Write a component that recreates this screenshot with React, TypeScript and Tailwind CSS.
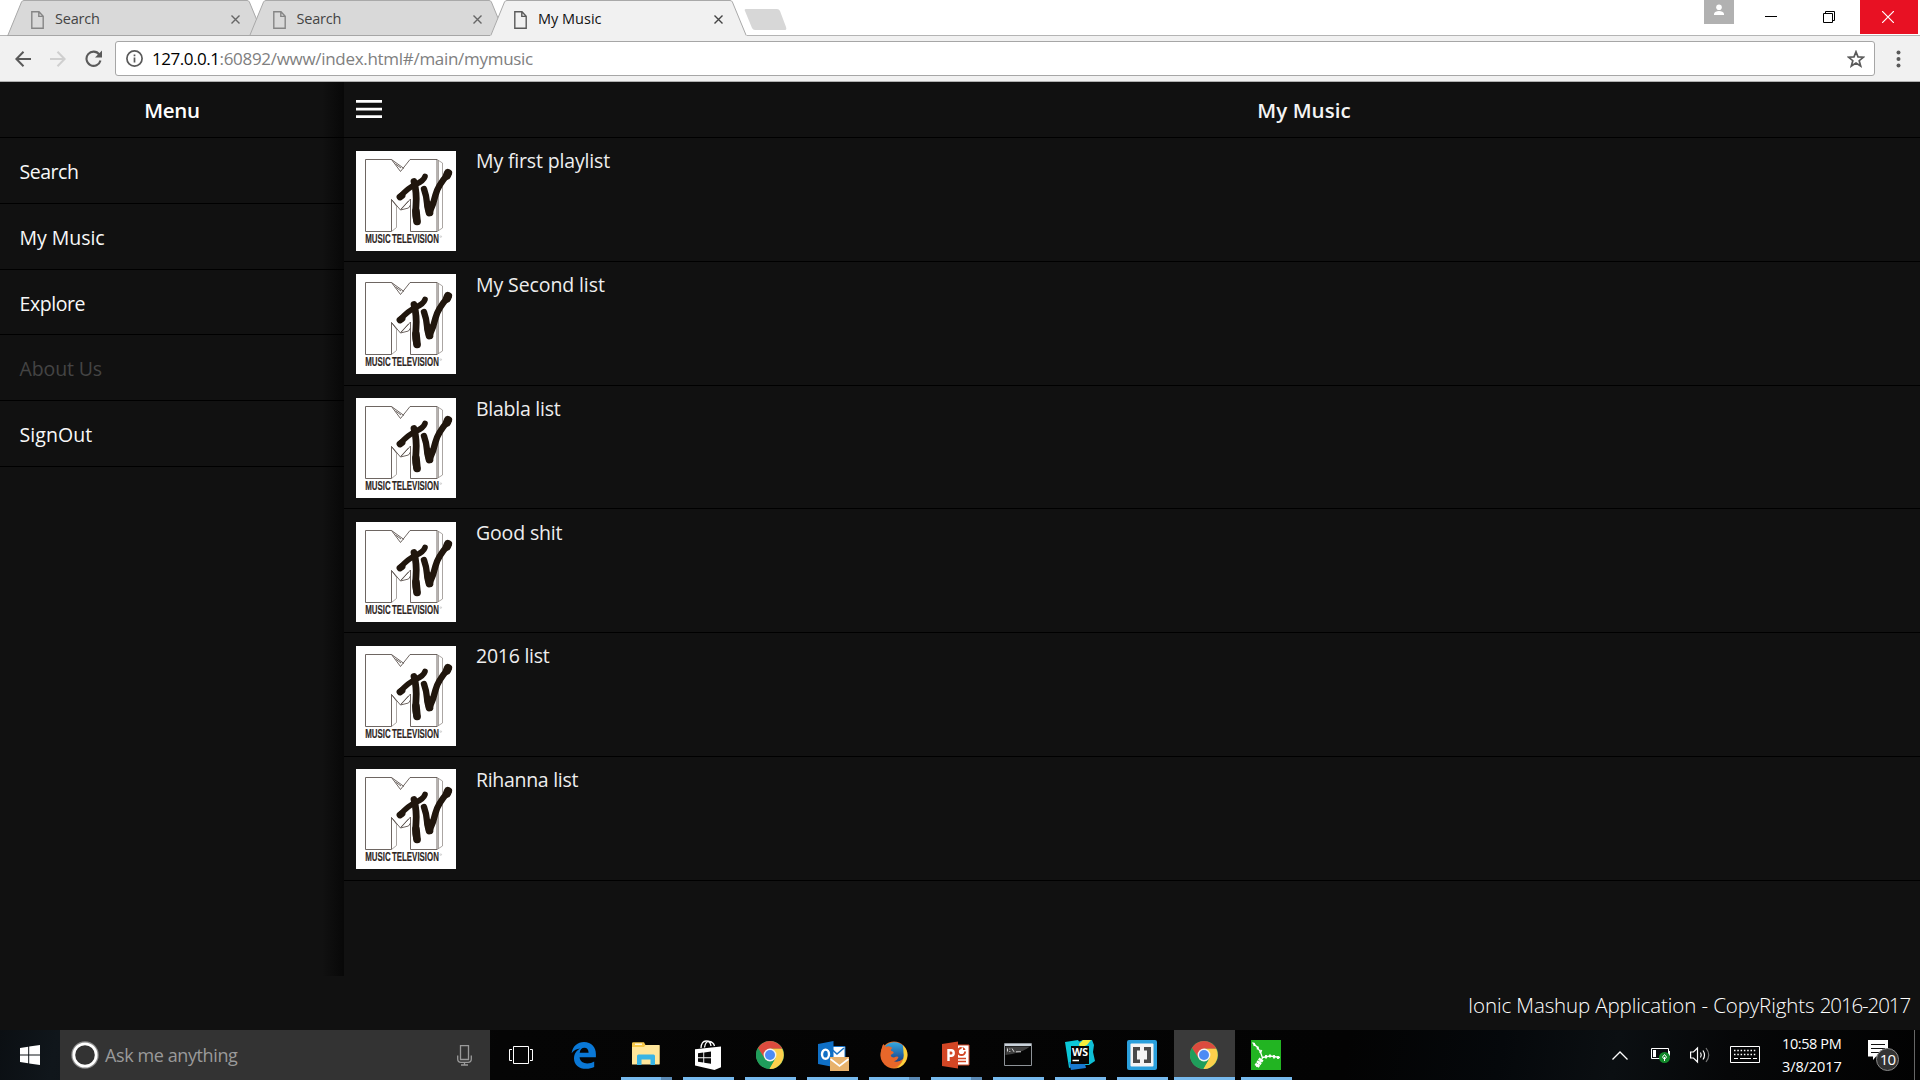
import React from "react";

const menu = [
  { label: "Search", cls: "tracking-[-0.5px] text-[#f8f8f8]" },
  { label: "My Music", cls: "tracking-[-0.05px] text-[#f8f8f8]" },
  { label: "Explore", cls: "tracking-[-0.45px] text-[#f8f8f8]" },
  { label: "About Us", cls: "font-medium tracking-[-0.15px] text-[#444444]" },
  { label: "SignOut", cls: "tracking-[0.05px] text-[#f8f8f8]" },
];

const playlists = [
  { title: "My first playlist", cls: "tracking-[-0.16px]" },
  { title: "My Second list", cls: "tracking-[-0.1px]" },
  { title: "Blabla list", cls: "tracking-[-0.25px]" },
  { title: "Good shit", cls: "tracking-[-0.15px]" },
  { title: "2016 list", cls: "tracking-[-0.25px]" },
  { title: "Rihanna list", cls: "tracking-[-0.3px]" },
];

function Tab({ title, active, first, cls }: { title: string; active?: boolean; first?: boolean; cls: string }) {
  return (
    <div className={`relative flex h-9 w-[257px] items-center pt-[3px] pl-[24px] pr-[24px] ${first ? "" : "ml-[-15.5px]"} ${active ? "z-10" : ""}`}>
      <svg className="absolute inset-0" width="257" height="36" viewBox="0 0 257 36">
        <path
          d="M0 36V35.5L.8 35 14.5 2Q15.3 .5 17 .5H240Q241.7 .5 242.4 2L256.2 35 257 35.5V36Z"
          fill={active ? "#f1f1f1" : "#d9d9d9"}
        />
        <path d="M.8 35.5 14.5 2Q15.3 .5 17 .5H240Q241.7 .5 242.4 2L256.2 35.5" fill="none" stroke="#a9a9a9" />
        {!active && <path d="M0 35.5H257" stroke="#a6a6a6" />}
      </svg>
      <svg className="relative" width="13" height="18" viewBox="0 0 13 18" fill="none" stroke={active ? "#5a5a5a" : "#858585"} strokeWidth="1.4">
        <path d="M.8.8H8L12.2 5.2V17.2H.8ZM7.8.8V5.4H12.2" />
      </svg>
      <span className={`relative -mt-[2px] ml-[11px] flex-1 text-[14.5px] leading-5 font-medium ${active ? "text-[#111]" : "text-[#444]"} ${cls}`}>{title}</span>
      <svg className="relative" width="9" height="9" viewBox="0 0 9 9" stroke={active ? "#444" : "#666"} strokeWidth="1.4">
        <path d="M.5.5 8.5 8.5M8.5.5.5 8.5" />
      </svg>
    </div>
  );
}

function MtvLogo() {
  return (
    <svg width="100" height="100" viewBox="0 0 100 100" className="block shrink-0 bg-white" fill="none">
      <g stroke="#5d5550" strokeWidth=".9" strokeLinejoin="round">
        <path d="M9.500 8.5H35.500L44.500 20.5 54 8.5H81V80.5H54.500V48L44.500 59 35.500 48.5V80.5H9.500Z" />
        <path d="M35.500 8.5 48 17.5M39.500 13 45 17M44.500 59 52.500 57 54.500 54M45 58 52.500 50M35.500 48.5 40.500 55" />
      </g>
      <g stroke="#958f8b" strokeWidth=".8">
        <path d="M81 8.5 86.500 12V77L81 80.5M35.500 80.5 40.500 76.5V55M82.500 9V80" />
      </g>
      <g stroke="#20160d" strokeLinecap="round" strokeLinejoin="round" transform="translate(-.5 0)">
        <path d="M45 45.5Q52 37 60 33.5T69.500 25.5" strokeWidth="5.6" />
        <path d="M44.5 46 46.500 44.5" strokeWidth="6.800" />
        <path d="M58.5 30.500Q61.500 42 60.500 54T61.5 70" strokeWidth="6.800" />
        <path d="M60.500 60 61.5 70.500" strokeWidth="7.600" />
        <path d="M68.5 38Q71 45 71.5 52T74 61.500Q78 53 80 44T93 22.500" strokeWidth="6.400" />
        <path d="M91.500 24.500 92.500 22" strokeWidth="8.200" />
        <path d="M73 54 74 61.500" strokeWidth="7.800" />
      </g>
      <g transform="translate(9.2 92.2) scale(.66 1)">
        <text x="0" y="0" fontSize="12" fontWeight="700" wordSpacing="-1.500" stroke="#2c2522" strokeWidth=".15" fontFamily="Liberation Sans, sans-serif" fill="#2c2522">MUSIC TELEVISION</text>
      </g>
      <circle cx="84.800" cy="85.6" r=".8" stroke="#999" strokeWidth=".4" />
    </svg>
  );
}

function ChromeLogo() {
  return (
    <svg width="28" height="28" viewBox="0 0 28 28">
      <circle cx="14" cy="14" r="14" fill="#4aa85c" />
      <path d="M14 14 1.9 7A14 14 0 0 1 26.1 7L26 7.7H14Z" fill="#dc4b3e" />
      <path d="M1.9 7 8.6 17.3 14 14 14 7.7Z" fill="#dc4b3e" />
      <path d="M26.2 7.7A14 14 0 0 1 13.2 28L19.5 17 14 7.7Z" fill="#fdd04c" />
      <path d="M1.9 7A14 14 0 0 0 13.2 28L19.3 17.4H8.6Z" fill="#1f9d5b" />
      <circle cx="14" cy="14" r="6.4" fill="#f3f3f3" />
      <circle cx="14" cy="14" r="5" fill="#4c8bf5" />
    </svg>
  );
}

function TaskView() {
  return (
    <svg className="mr-[3px]" width="24" height="18" viewBox="0 0 24 18" fill="none" stroke="#fff">
      <path d="M4.5.5H19.5V17.5H4.5ZM3 3.5H.5V14.5H3M21 3.5H23.5V14.5H21" />
    </svg>
  );
}

function Edge() {
  return (
    <svg width="26" height="28" viewBox="0 0 26 28">
      <path
        d="M.6 12.2C1.6 5 6.7.9 13 .9 20.400.9 24.900 6 24.900 13V16.300H8.600C8.900 20.600 12.600 22.400 16.200 22.400 19 22.400 21.300 21.600 23.200 20.400V26C20.900 27.200 18.200 27.800 15.200 27.800 7.800 27.800 3 23.500 3 17.400 3 13 5.400 9.400 9.300 7.500 6 7.700 2.800 9.400.6 12.200ZM8.700 11.700H17.600C17.600 8.600 16 6.700 13.400 6.700 10.900 6.700 9.100 8.500 8.700 11.700Z"
        fill="#0a78d6"
      />
    </svg>
  );
}

function Explorer() {
  return (
    <svg width="28" height="24" viewBox="0 0 28 24" className="relative top-[-1px]">
      <path d="M0 1.500Q0 .3 1.200.3H12L13.500 3H26.500Q27.500 3 27.500 4V22H0Z" fill="#f7c94b" />
      <path d="M3 1.500H10V3H3Z" fill="#fff6d8" />
      <path d="M0 5H12L13.500 3H27.500V22.500H0Z" fill="#ffe69b" />
      <path d="M5 23V14Q5 12.500 6.500 12.500H21.500Q23 12.500 23 14V23H18.500V17.500H9.500V23Z" fill="#38b4e6" />
    </svg>
  );
}

function Store() {
  return (
    <svg width="26" height="30" viewBox="0 0 26 30">
      <path d="M6 8Q6.500 1 11 1T16 6M9.500 7.500Q10.500 .8 14.500 1.500T19.500 6" fill="none" stroke="#fff" strokeWidth="1.300" />
      <path d="M0 9.200 26 6.500V27.200L19.500 30 0 25.500Z" fill="#fff" />
      <path d="M3 13.200 8.300 12.500V17.300H3ZM9.200 12.400 16 11.500V17.300H9.200ZM3 18.200H8.300V22.600L3 21.800ZM9.200 18.200H16V23.800L9.200 22.700Z" fill="#0a0a0a" />
    </svg>
  );
}

function Outlook() {
  return (
    <svg width="32" height="32" viewBox="0 0 32 32" className="relative left-[1px] top-[1px]">
      <path d="M14 6.500H28V18H14Z" fill="#fff" stroke="#1b73c4" />
      <path d="M15 9.500 20 14 27 8" fill="none" stroke="#1b73c4" strokeWidth="1.600" />
      <path d="M1 4 16.500 1V27L1 24Z" fill="#0f6fc5" />
      <ellipse cx="8.500" cy="14.200" rx="3.500" ry="4.600" fill="none" stroke="#fff" strokeWidth="2.400" />
      <path d="M13 17H32V31H13Z" fill="#e8b26c" />
      <path d="M13.500 19 22.500 26 31.500 19" fill="none" stroke="#fff" strokeWidth="1.700" />
    </svg>
  );
}

function Firefox() {
  return (
    <svg width="28" height="28" viewBox="0 0 28 28">
      <defs>
        <linearGradient id="fxFlame" x1="0" y1="0" x2="1" y2="1">
          <stop offset="0" stopColor="#f08a2c" />
          <stop offset=".45" stopColor="#e0561f" />
          <stop offset="1" stopColor="#f6a02c" />
        </linearGradient>
        <linearGradient id="fxGlobe" x1="0" y1="0" x2="0" y2="1">
          <stop offset="0" stopColor="#35a8df" />
          <stop offset="1" stopColor="#173f86" />
        </linearGradient>
      </defs>
      <circle cx="14" cy="14" r="13.500" fill="url(#fxFlame)" />
      <path d="M4.500 6A13 13 0 0 1 23.500 5Q27 11 23.500 17.500 19 22.500 13 20 8 17 9 12Z" fill="url(#fxGlobe)" />
      <path d="M22.800 4.300Q29 9.500 26.800 17.500 24.500 25 17 27 25 20 23.500 12 23.500 8 22.800 4.300Z" fill="#fbd23d" />
      <path d="M1.800 7Q2.200 4 3.800 3 4.500 5.200 6 5.800 9.500 4.500 12.500 7 10.500 7.800 11 9.800 14.500 10.800 13.500 12.300L10.700 14Q11 16.500 14 16.500 17 15 18.500 16 17.500 19.500 13.500 20.500 18 22.500 22 18.500 19.500 26 12.500 26.500 4 26 1.200 17.500Q0 11.500 1.800 7Z" fill="#e8672a" />
    </svg>
  );
}

function PowerPoint() {
  return (
    <svg width="28" height="28" viewBox="0 0 28 28">
      <path d="M13 4H27V24H13Z" fill="#fff" stroke="#d24625" />
      <circle cx="19.500" cy="10.500" r="3.600" fill="none" stroke="#d24625" strokeWidth="2" />
      <path d="M19.500 10.500V6.500H24V10.500Z" fill="#fff" />
      <path d="M21 9V6.500A3 3 0 0 1 23.500 9Z" fill="#d24625" />
      <path d="M16 17.500H24M16 20.500H24" stroke="#d24625" strokeWidth="1.400" />
      <path d="M0 3 16 .5V27.500L0 25Z" fill="#d24625" />
      <path d="M6.500 20V9.200H9.200Q11.700 9.200 11.700 12T9.200 14.800H6.500" fill="none" stroke="#fff" strokeWidth="2.400" />
    </svg>
  );
}

function CommandPrompt() {
  return (
    <svg width="28" height="23" viewBox="0 0 28 23" className="relative top-[-1px]">
      <path d="M.5.5H27.500V22.500H.5Z" fill="#050505" stroke="#8e9398" />
      <path d="M1 1H27V3H1Z" fill="#c9d2da" />
      <path d="M1.500 3.500H26Q18 10 1.500 12Z" fill="#3f3f3f" />
      <path d="M3.500 5.500V8.500M5.800 5.500V6.500M5.800 8V9M8 5.500 10 8.800M12 8.800H17" stroke="#d7d7d7" strokeWidth="1" />
    </svg>
  );
}

function WebStorm() {
  return (
    <svg width="30" height="30" viewBox="0 0 30 30">
      <path d="M0 2 13 0 17 6 10 26 4 28Z" fill="#0bc8d8" />
      <path d="M13 2 18 0 27 0 29 5 28 12 30 21 24 25H10Z" fill="#0fbfd6" />
      <path d="M14 4 18 0H26L22 5 15 8Z" fill="#f6ec3c" />
      <path d="M4 22 20 24 21 28 6 30Z" fill="#1878d2" />
      <path d="M6 6H24V24H6Z" fill="#060606" />
      <text x="7" y="15.800" fontSize="10.500" fontWeight="700" textLength="16" lengthAdjust="spacingAndGlyphs" fontFamily="Open Sans, sans-serif" fill="#fff">WS</text>
      <path d="M7.500 20.500H14" stroke="#fff" strokeWidth="1.500" />
    </svg>
  );
}

function Brackets() {
  return (
    <svg width="30" height="30" viewBox="0 0 30 30">
      <rect width="30" height="30" rx="2" fill="#2a9fdc" />
      <rect x="3.500" y="3.500" width="23" height="23" rx="1" fill="#f4f4f4" />
      <path d="M13 7H6V23H13V19.500H10V10.500H13ZM17 7H24V23H17V19.500H20V10.500H17Z" fill="#4a4a4a" />
    </svg>
  );
}

function GreenBranches() {
  return (
    <svg width="30" height="30" viewBox="0 0 30 30">
      <rect width="30" height="30" fill="#22b422" />
      <g stroke="#fff" fill="none">
        <path d="M1.500 2.500 6 7 9.500 12 11.500 18 5.500 27M11.500 17.500 19 16 29 17.500" strokeWidth="1.300" />
        <path d="M10.500 19 5.500 26.500" strokeWidth="5" strokeDasharray="2.600 .5" />
        <path d="M3 3 3.500 6M7 6.500 6.500 9.500M10.500 10 9 13M15 15V18.500M19 14.500V17.500M23 15V18.500M27 16V19" strokeWidth="1.800" />
      </g>
    </svg>
  );
}

const apps: { icon: React.ReactNode; open?: boolean; grouped?: boolean; active?: boolean }[] = [
  { icon: <TaskView /> },
  { icon: <Edge /> },
  { icon: <Explorer />, open: true, grouped: true },
  { icon: <Store />, open: true },
  { icon: <ChromeLogo />, open: true },
  { icon: <Outlook />, open: true },
  { icon: <Firefox />, open: true, grouped: true },
  { icon: <PowerPoint />, open: true, grouped: true },
  { icon: <CommandPrompt />, open: true },
  { icon: <WebStorm />, open: true },
  { icon: <Brackets />, open: true },
  { icon: <ChromeLogo />, open: true, active: true },
  { icon: <GreenBranches />, open: true },
];

function BrowserChrome() {
  return (
    <header>
      <div className="flex h-9 justify-between bg-white shadow-[inset_0_-1px_0_#b4b4b4]">
        <div className="flex pl-[7px]">
          <Tab title="Search" first cls="tracking-[-0.2px]" />
          <Tab title="Search" cls="tracking-[-0.2px]" />
          <Tab title="My Music" active cls="tracking-normal" />
          <svg className="mt-[9px] ml-[-3px]" width="44" height="21" viewBox="0 0 44 21">
            <path d="M2 0H33Q35 0 36 2L42 18Q43 21 41 21H11Q9 21 8 19L1 2Q0 0 2 0Z" fill="#d7d7d7" />
          </svg>
        </div>
        <div className="flex pr-[2px]">
          <div className="flex h-6 w-[30px] justify-center bg-[#b1b1b1] pt-[4px]">
            <svg width="12" height="12" viewBox="0 0 12 12" fill="#fff"><circle cx="6" cy="3.200" r="2.800" /><path d="M1 11V9.500Q2 7 6 7T11 9.500V11Z" /></svg>
          </div>
          <div className="flex w-[68px] justify-center pt-4 pl-[6px]"><div className="h-px w-3 bg-black" /></div>
          <div className="flex w-[58px] justify-center pt-[11px]">
            <svg className="mr-[4px]" width="12" height="12" viewBox="0 0 12 12" fill="none" stroke="#000"><path d="M.5 2.500H9.500V11.500H.5ZM2.500 2.500V.5H11.500V9.500H9.500" /></svg>
          </div>
          <div className="flex h-[34px] w-[58px] items-center justify-center bg-[#e81123]">
            <svg className="mr-[2px]" width="12" height="12" viewBox="0 0 12 12" stroke="#fff" strokeWidth="1.200"><path d="M0 0 12 12M12 0 0 12" /></svg>
          </div>
        </div>
      </div>
      <div className="flex h-[46px] items-center border-b border-[#b0b0b0] bg-[#f1f1f1] pl-[15px] text-[#5a5a5a]">
        <svg width="16" height="16" viewBox="0 0 16 16" fill="none" stroke="currentColor" strokeWidth="2"><path d="M16 8H1.500M8.500.8 1.400 8 8.500 15.200" /></svg>
        <svg className="ml-[19px] text-[#cfcfcf]" width="16" height="16" viewBox="0 0 16 16" fill="none" stroke="currentColor" strokeWidth="2"><path d="M0 8H14.500M7.500.8 14.600 8 7.500 15.200" /></svg>
        <svg className="ml-[19px]" width="17" height="17" viewBox="0 0 17 17"><path d="M14.300 4.500A7.100 7.100 0 1 0 15.500 10.500" fill="none" stroke="currentColor" strokeWidth="2.100" /><path d="M17 .5V7.500H10Z" fill="currentColor" /></svg>
        <div className="ml-[13px] flex h-[35px] w-[1760px] items-center rounded-[3px] border border-[#a6a6a6] bg-white pr-[9px] pl-[10px]">
          <svg width="17" height="17" viewBox="0 0 17 17" fill="none" stroke="currentColor"><circle cx="8.500" cy="8.500" r="7.600" strokeWidth="1.700" /><path d="M8.500 7.500V12.500M8.500 4.500V6.200" strokeWidth="1.700" /></svg>
          <span className="ml-[9px] flex-1 text-[17px] leading-6 font-medium text-[#808080]">
            <span className="tracking-[-0.47px] text-black">127.0.0.1</span>
            <span className="tracking-[-0.3px]">:60892/www/index.html#/main/mymusic</span>
          </span>
          <svg width="18" height="18" viewBox="0 0 18 18" fill="none" stroke="currentColor" strokeWidth="1.700"><path d="M9 1.800 11 6.900 16.500 7.200 12.200 10.700 13.700 16 9 13 4.300 16 5.800 10.700 1.500 7.200 7 6.900Z" /></svg>
        </div>
        <svg className="ml-[21px]" width="5" height="18" viewBox="0 0 5 18" fill="currentColor"><circle cx="2.500" cy="2.500" r="2" /><circle cx="2.500" cy="9" r="2" /><circle cx="2.500" cy="15.500" r="2" /></svg>
      </div>
    </header>
  );
}

function Taskbar() {
  return (
    <div className="flex h-[50px] bg-[linear-gradient(100deg,#0b0f13_0,#10161b_3%,#050505_26%,#030303_70%,#05080b_78%,#0b0f12_84%,#060708_90%,#020202_100%)]">
      <div className="flex w-[60px] items-center justify-center">
        <svg width="20" height="20" viewBox="0 0 20 20" fill="#fff"><path d="M0 2.900 8.200 1.700V9.500H0ZM9.200 1.600 20 0V9.500H9.200ZM0 10.500H8.200V18.300L0 17.100ZM9.200 10.500H20V20L9.200 18.400Z" /></svg>
      </div>
      <div className="flex w-[430px] items-center bg-[#333333] pr-[18px] pl-[11px]">
        <svg width="28" height="28" viewBox="0 0 28 28" fill="none"><circle cx="14" cy="14" r="13" stroke="#8a8a8a" strokeWidth="1.500" /><circle cx="14" cy="14" r="11.200" stroke="#fff" strokeWidth="2.800" /></svg>
        <span className="ml-[6px] flex-1 text-[18px] leading-6 font-medium tracking-[-0.4px] text-[#9a9a9a]">Ask me anything</span>
        <svg width="15" height="21" viewBox="0 0 15 21" fill="none" stroke="#9a9a9a" strokeWidth="1.300"><path d="M3.500.7H11.500V14.500H3.500ZM.7 10.500V14Q.7 17.300 4 17.300H11Q14.300 17.300 14.300 14V10.500M7.500 17.500V20M4 20H11" /></svg>
      </div>
      <div className="flex pl-[2px]">
        {apps.map((a, i) => (
          <div key={i} className={`flex h-[50px] w-[62px] flex-col items-center ${a.active ? "bg-[linear-gradient(90deg,#3a3a3a_61px,transparent_61px)]" : ""}`}>
            <div className="flex h-[47px] items-center pt-[3px] pr-[2px]">{a.icon}</div>
            {a.open && (
              <div className={`flex h-[3px] bg-[#76b9ed] ${a.active ? "w-[61px] self-start" : "mr-[1px] w-[51px]"}`}>
                {a.grouped && <div className="ml-auto w-[11px] bg-[#5a89b4]" />}
              </div>
            )}
          </div>
        ))}
      </div>
      <div className="ml-auto flex items-center">
        <svg width="16" height="9" viewBox="0 0 16 9" fill="none" stroke="#fff" strokeWidth="1.300"><path d="M.5 8.500 8 1 15.500 8.500" /></svg>
        <svg className="ml-[23px]" width="20" height="16" viewBox="0 0 20 16">
          <path d="M.5 1.500H17.500V11.500H.5Z" fill="none" stroke="#fff" />
          <path d="M2 3H5V10H2Z" fill="#fff" />
          <path d="M18 4H19V9H18Z" fill="#fff" />
          <circle cx="13.500" cy="10.500" r="5.500" fill="#12892a" />
          <path d="M13.500 7.500 15.500 10 13.500 12.500 11.500 10ZM13.500 10V14" fill="none" stroke="#fff" />
        </svg>
        <svg className="ml-[19px]" width="21" height="18" viewBox="0 0 21 18" fill="none" stroke="#fff" strokeWidth="1.200">
          <path d="M.6 6H3.500L7.500 2V16L3.500 12H.6Z" />
          <path d="M10.500 6.500Q12 9 10.500 11.500M13 4.500Q16 9 13 13.500" />
          <path d="M16 2Q21.500 9 16 16" stroke="#777" />
        </svg>
        <svg className="ml-[19px]" width="30" height="18" viewBox="0 0 30 18" fill="none" stroke="#fff">
          <path d="M.5.5H29.500V16.500H.5Z" />
          <path d="M4 4.500H27M4 8.500H27" strokeDasharray="1.500 1.800" strokeWidth="1.300" />
          <path d="M4 12.500H8M10 12.500H21M23 12.500H27" />
        </svg>
        <div className="ml-[22px] flex w-[60px] flex-col text-[14.5px] leading-[23px] font-medium whitespace-nowrap text-white">
          <span className="tracking-[-0.4px]">10:58 PM</span>
          <span className="tracking-[-0.1px]">3/8/2017</span>
        </div>
        <div className="relative mt-[6px] ml-[26px] h-[36px] w-[46px]">
          <svg width="20" height="22" viewBox="0 0 20 22"><path d="M0 0H20V16.500H8L5 20V16.500H0Z" fill="#fff" /><path d="M3 4.500H17M3 8.500H17M3 12.500H11" stroke="#111" /></svg>
          <div className="absolute top-[8px] left-[8px] flex size-[23px] items-center justify-center rounded-full border border-[#8a8a8a] bg-[#333] text-[15px] tracking-[-0.8px] text-white">10</div>
        </div>
        <div className="mr-[5px] h-[50px] w-px bg-[#666]" />
      </div>
    </div>
  );
}

export default function App() {
  return (
    <div className="flex h-[1080px] w-[1920px] flex-col overflow-hidden bg-[#111111] font-['Open_Sans','Noto_Sans',sans-serif]">
      <BrowserChrome />
      <div className="flex h-[894px] overflow-hidden">
        <aside className="w-[344px] shrink-0 bg-[linear-gradient(90deg,transparent_322px,#080808_343px)]">
          <div className="h-14 border-b border-black text-center text-[20.5px] leading-[57px] font-semibold tracking-[-0.3px] text-white">Menu</div>
          {menu.map((m) => (
            <div key={m.label} className={`h-[65.75px] border-b border-black pl-[19.6px] text-[19.5px] leading-[67px] ${m.cls}`}>{m.label}</div>
          ))}
        </aside>
        <main className="w-[1920px] shrink-0">
          <div className="flex h-14 border-b border-black">
            <svg className="mt-[18px] ml-3" width="26" height="18" viewBox="0 0 26 18" fill="#fff"><path d="M0 0H26V2.800H0ZM0 7.800H26V10.500H0ZM0 15.200H26V18H0Z" /></svg>
            <h1 className="mr-[38px] flex-1 text-center text-[20.5px] leading-[57px] font-semibold tracking-[0.05px] text-[#f4f4f4]">My Music</h1>
          </div>
          {playlists.map((p) => (
            <div key={p.title} className="flex h-[123.75px] items-start border-b border-black pt-[12.6px] pl-3">
              <MtvLogo />
              <span className={`-mt-[1.3px] ml-5 text-[19.5px] leading-6 text-[#eeeeee] ${p.cls}`}>{p.title}</span>
            </div>
          ))}
        </main>
      </div>
      <footer className="h-[54px] pr-[10px] text-right text-[20.5px] leading-[59px] font-light text-white">
        <span className="tracking-[-0.12px]">Ionic Mashup Application - </span>
        <span className="tracking-[-0.1px]">CopyRights </span>
        <span className="tracking-[-1.1px]">2016-2017</span>
      </footer>
      <Taskbar />
    </div>
  );
}
